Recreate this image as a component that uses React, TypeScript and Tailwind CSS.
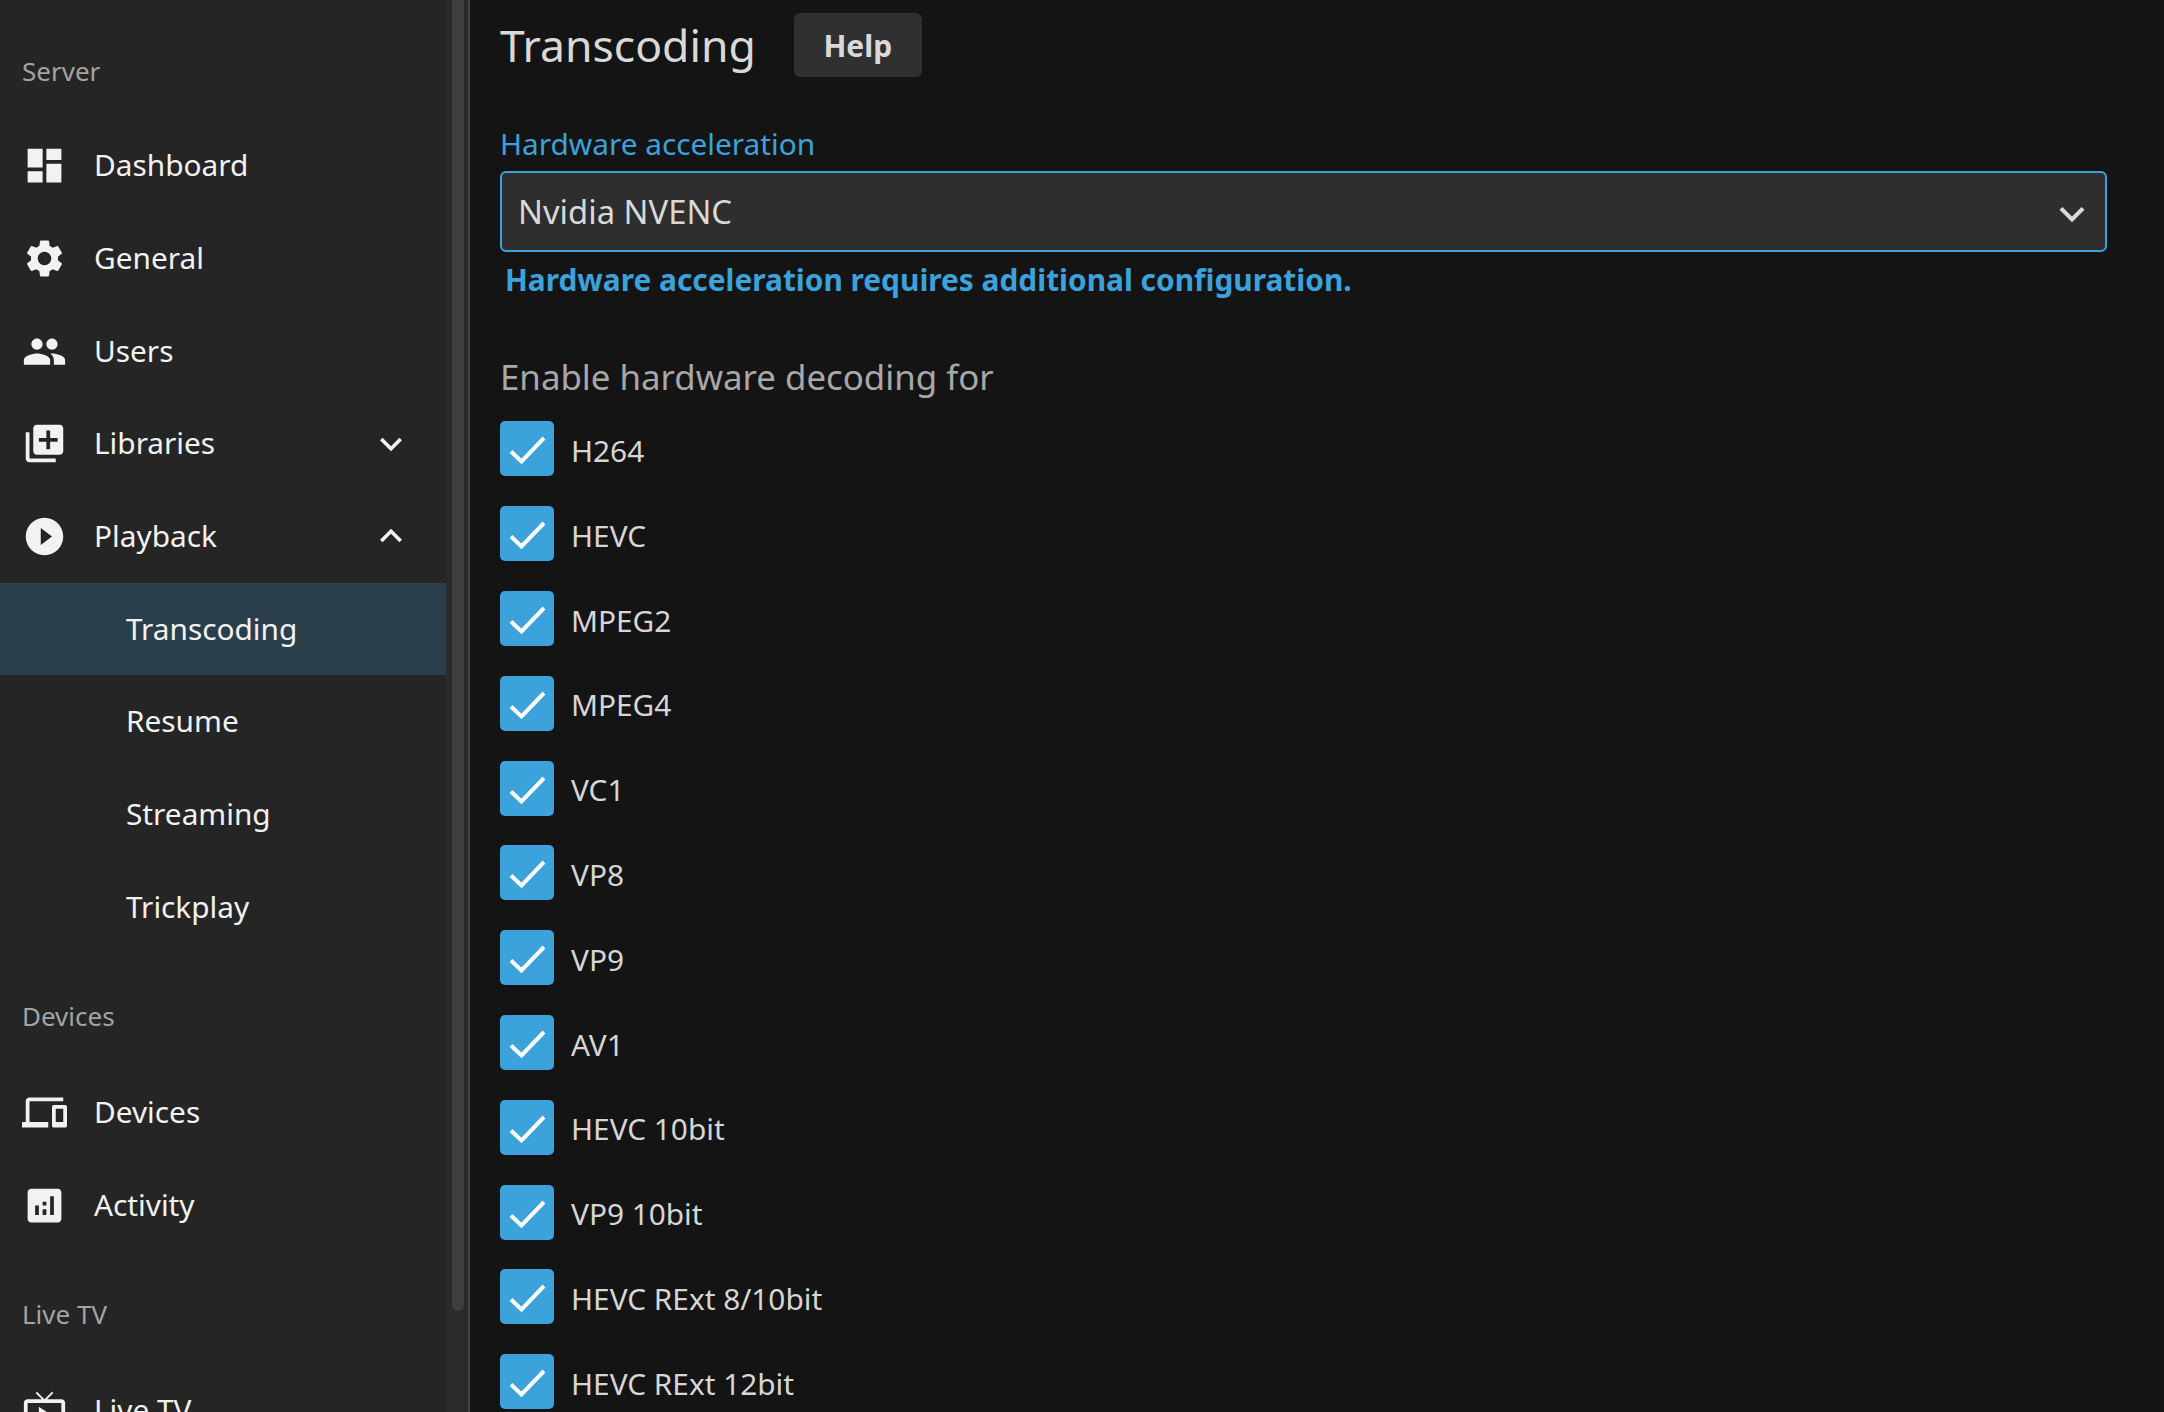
import type { ReactNode } from "react";

const icons = {
  dashboard: "M3 13h8V3H3v10zm0 8h8v-6H3v6zm10 0h8V11h-8v10zm0-18v6h8V3h-8z",
  settings:
    "M19.14 12.94c.04-.3.06-.61.06-.94 0-.32-.02-.64-.07-.94l2.03-1.58c.18-.14.23-.41.12-.61l-1.92-3.32c-.12-.22-.37-.29-.59-.22l-2.39.96c-.5-.38-1.03-.7-1.62-.94l-.36-2.54c-.04-.24-.24-.41-.48-.41h-3.84c-.24 0-.43.17-.47.41l-.36 2.54c-.59.24-1.13.57-1.62.94l-2.39-.96c-.22-.08-.47 0-.59.22L2.74 8.87c-.12.21-.08.47.12.61l2.03 1.58c-.05.3-.09.63-.09.94s.02.64.07.94l-2.03 1.58c-.18.14-.23.41-.12.61l1.92 3.32c.12.22.37.29.59.22l2.39-.96c.5.38 1.03.7 1.62.94l.36 2.54c.05.24.24.41.48.41h3.84c.24 0 .44-.17.47-.41l.36-2.54c.59-.24 1.13-.56 1.62-.94l2.39.96c.22.08.47 0 .59-.22l1.92-3.32c.12-.22.07-.47-.12-.61l-2.01-1.58zM12 15.6c-1.98 0-3.6-1.62-3.6-3.6s1.62-3.6 3.6-3.6 3.6 1.62 3.6 3.6-1.62 3.6-3.6 3.6z",
  people:
    "M16 11c1.66 0 2.99-1.34 2.99-3S17.66 5 16 5c-1.66 0-3 1.34-3 3s1.34 3 3 3zm-8 0c1.66 0 2.99-1.34 2.99-3S9.66 5 8 5C6.34 5 5 6.34 5 8s1.34 3 3 3zm0 2c-2.33 0-7 1.17-7 3.5V19h14v-2.5c0-2.33-4.67-3.5-7-3.5zm8 0c-.29 0-.62.02-.97.05 1.16.84 1.97 1.97 1.97 3.45V19h6v-2.5c0-2.33-4.67-3.5-7-3.5z",
  libraryAdd:
    "M4 6H2v14c0 1.1.9 2 2 2h14v-2H4V6zm16-4H8c-1.1 0-2 .9-2 2v12c0 1.1.9 2 2 2h12c1.1 0 2-.9 2-2V4c0-1.1-.9-2-2-2zm-1 9h-4v4h-2v-4H9V9h4V5h2v4h4v2z",
  play: "M12 2C6.48 2 2 6.48 2 12s4.48 10 10 10 10-4.48 10-10S17.52 2 12 2zm-2 14.5v-9l6 4.5-6 4.5z",
  more: "M16.59 8.59L12 13.17 7.41 8.59 6 10l6 6 6-6z",
  less: "M12 8l-6 6 1.41 1.41L12 10.83l4.59 4.58L18 14z",
  devices:
    "M4 6h18V4H4c-1.1 0-2 .9-2 2v11H0v3h14v-3H4V6zm19 2h-6c-.55 0-1 .45-1 1v10c0 .55.45 1 1 1h6c.55 0 1-.45 1-1V9c0-.55-.45-1-1-1zm-1 9h-4v-7h4v7z",
  analytics:
    "M19 3H5c-1.1 0-2 .9-2 2v14c0 1.1.9 2 2 2h14c1.1 0 2-.9 2-2V5c0-1.1-.9-2-2-2zM9 17H7v-5h2v5zm4 0h-2v-3h2v3zm0-5h-2v-2h2v2zm4 5h-2V7h2v10z",
  liveTv:
    "M21 6h-7.59l3.29-3.29L16 2l-4 4-4-4-.71.71L10.59 6H3c-1.1 0-2 .89-2 2v12c0 1.1.9 2 2 2h18c1.1 0 2-.9 2-2V8c0-1.11-.9-2-2-2zm0 14H3V8h18v12zM9 10v8l6-4z",
};

const codecs = [
  "H264",
  "HEVC",
  "MPEG2",
  "MPEG4",
  "VC1",
  "VP8",
  "VP9",
  "AV1",
  "HEVC 10bit",
  "VP9 10bit",
  "HEVC RExt 8/10bit",
  "HEVC RExt 12bit",
];

const Icon = ({ d, className }: { d: string; className: string }) => (
  <svg viewBox="0 0 24 24" fill="currentColor" className={className}>
    <path d={d} />
  </svg>
);

const SectionLabel = ({ children, first }: { children: ReactNode; first?: boolean }) => (
  <div className={`${first ? "h-[110px]" : "h-[112.5px]"} pt-[14px] pl-[22px] flex items-center text-[26px] text-[#a3a3a3]`}>
    {children}
  </div>
);

const NavItem = ({ icon, label, arrow }: { icon: string; label: string; arrow?: string }) => (
  <div className="h-[92.7px] flex items-center pl-[22px] pr-[33px] text-[#f2f2f2]">
    <Icon d={icon} className="w-[45px] h-[45px] shrink-0" />
    <span className="ml-[27px] text-[29.8px] flex-1">{label}</span>
    {arrow && <Icon d={arrow} className="w-[44px] h-[44px] shrink-0" />}
  </div>
);

const SubItem = ({ label, active }: { label: string; active?: boolean }) => (
  <div className={`h-[92.7px] flex items-center pl-[126px] text-[29.8px] text-[#f2f2f2] ${active ? "bg-[#2a3e4c]" : ""}`}>
    {label}
  </div>
);

const Sidebar = () => (
  <aside className="relative flex w-[470px] h-full shrink-0 bg-[#252525] overflow-hidden border-r-2 border-[#444444]">
    <nav className="w-[446px] shrink-0 pt-[9.3px]">
      <SectionLabel first>Server</SectionLabel>
      <NavItem icon={icons.dashboard} label="Dashboard" />
      <NavItem icon={icons.settings} label="General" />
      <NavItem icon={icons.people} label="Users" />
      <NavItem icon={icons.libraryAdd} label="Libraries" arrow={icons.more} />
      <NavItem icon={icons.play} label="Playback" arrow={icons.less} />
      <SubItem label="Transcoding" active />
      <SubItem label="Resume" />
      <SubItem label="Streaming" />
      <SubItem label="Trickplay" />
      <SectionLabel>Devices</SectionLabel>
      <NavItem icon={icons.devices} label="Devices" />
      <NavItem icon={icons.analytics} label="Activity" />
      <SectionLabel>Live TV</SectionLabel>
      <NavItem icon={icons.liveTv} label="Live TV" />
    </nav>
    {/* scrollbar track + thumb */}
    <div className="flex-1 bg-[#2a2a2a]" />
    <div className="absolute top-0 left-[452px] w-[12px] h-[1311px] rounded-b-md bg-[#3e3e3e]" />
  </aside>
);

const CodecRow = ({ label }: { label: string }) => (
  <div className="h-[84.8px] flex items-center text-[29.8px] text-[#d6d6d6]">
    <div className="w-[54px] h-[55px] mb-[5px] rounded-[5px] bg-[#3ba2dc] shrink-0">
      <svg viewBox="0 0 54 55" fill="none" stroke="white" strokeWidth="4" className="w-[54px] h-[55px]">
        <path d="M11 30.5l10.5 10L44 17" />
      </svg>
    </div>
    <span className="ml-[17px]">{label}</span>
  </div>
);

export default function App() {
  return (
    <div className="flex w-full h-screen overflow-hidden bg-[#141414] font-['Noto_Sans',sans-serif]">
      <Sidebar />
      <main className="flex-1 pl-[30px] pr-[57px] overflow-hidden">
        <div className="flex items-center mt-[13px] h-[64px]">
          <h1 className="text-[44.5px] text-[#d9d9d9]">Transcoding</h1>
          <button className="ml-[38px] w-[128px] h-[64px] rounded-[6px] bg-[#303030] text-[30px] font-bold text-[#d9d9d9]">Help</button>
        </div>
        <div className="mt-[47px] h-[40px] flex items-center text-[29.8px] text-[#3ba2dc]">Hardware acceleration</div>
        <div className="mt-[7px] h-[81px] flex items-center justify-between rounded-[6px] border-2 border-[#3ba2dc] bg-[#2e2e2e] pl-[16px] pr-[8px] text-[32.8px] text-[#d9d9d9]">
          <span>Nvidia NVENC</span>
          <Icon d={icons.more} className="w-[50px] h-[50px] mt-[5px] text-[#d9d9d9]" />
        </div>
        <div className="mt-[8px] pl-[5px] h-[40px] flex items-center text-[29.85px] font-bold text-[#3ba2dc]">Hardware acceleration requires additional configuration.</div>
        <div className="mt-[57px] h-[40px] flex items-center text-[34.85px] text-[#a8a8a8]">Enable hardware decoding for</div>
        <div className="mt-[12px]">
          {codecs.map((c) => (
            <CodecRow key={c} label={c} />
          ))}
        </div>
      </main>
    </div>
  );
}
